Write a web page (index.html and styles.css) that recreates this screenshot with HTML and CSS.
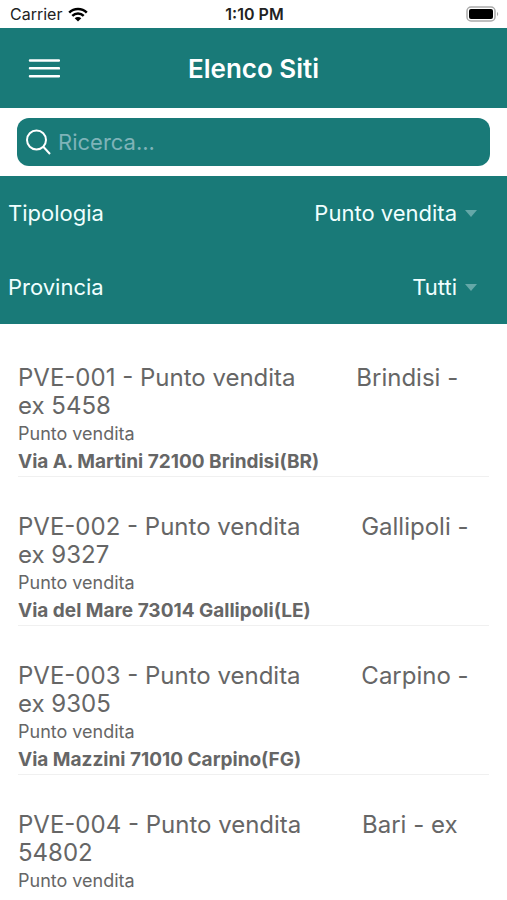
FILE: index.html
```html
<!DOCTYPE html>
<html lang="it">
  <head>
    <meta charset="UTF-8" />
    <meta name="viewport" content="width=device-width, initial-scale=1.0" />
    <title>Elenco Siti</title>
    <link rel="stylesheet" href="styles.css">
  </head>
  <body>
    <div class="app">
      <div class="status-bar">
        <div class="carrier">
          <span>Carrier</span>
          <svg class="wifi" viewBox="0 0 20 15" aria-hidden="true">
            <path d="M1.2 5.6a12.5 12.5 0 0 1 17.6 0M4.3 8.9a8.1 8.1 0 0 1 11.4 0" fill="none" stroke="currentColor" stroke-width="2.5" />
            <path d="M10 14.6l-3.3-3.3a4.7 4.7 0 0 1 6.6 0z" fill="currentColor" />
          </svg>
        </div>
        <time class="clock">1:10 PM</time>
        <svg class="battery" viewBox="0 0 33 16" aria-hidden="true">
          <rect x="1" y="1" width="28" height="14" rx="4" fill="none" stroke="#aaa" stroke-width="1.5" />
          <rect x="3" y="3" width="24" height="10" rx="2" />
          <path d="M31 6c1.6.6 1.6 3.4 0 4z" fill="#aaa" />
        </svg>
      </div>

      <header class="header">
        <button class="menu-button" type="button" aria-label="Menu">
          <svg viewBox="0 0 32 20" aria-hidden="true">
            <path d="M2 2.500h29M2 10.300h29M2 18.200h29" stroke="currentColor" stroke-width="2.5" stroke-linecap="round" />
          </svg>
        </button>
        <h1>Elenco Siti</h1>
      </header>

      <div class="search">
        <label class="search-box">
          <svg viewBox="0 0 26 26" aria-hidden="true">
            <circle cx="10.500" cy="11" r="9.500" />
            <path d="M17.300 17.800L24 25" />
          </svg>
          <input type="search" placeholder="Ricerca..." aria-label="Ricerca" />
        </label>
      </div>

      <div class="filters">
        <div class="filter">
          <label for="tipologia">Tipologia</label>
          <select id="tipologia">
            <option>Punto vendita</option>
          </select>
          <span class="arrow"></span>
        </div>
        <div class="filter">
          <label for="provincia">Provincia</label>
          <select id="provincia">
            <option>Tutti</option>
          </select>
          <span class="arrow"></span>
        </div>
      </div>

      <ul class="site-list">
        <li class="site">
          <h2>PVE-001 - Punto vendita         Brindisi - ex 5458</h2>
          <p class="type">Punto vendita</p>
          <p class="address">Via A. Martini 72100 Brindisi(BR)</p>
        </li>
        <li class="site">
          <h2>PVE-002 - Punto vendita         Gallipoli - ex 9327</h2>
          <p class="type">Punto vendita</p>
          <p class="address">Via del Mare 73014 Gallipoli(LE)</p>
        </li>
        <li class="site">
          <h2>PVE-003 - Punto vendita         Carpino - ex 9305</h2>
          <p class="type">Punto vendita</p>
          <p class="address">Via Mazzini 71010 Carpino(FG)</p>
        </li>
        <li class="site">
          <h2>PVE-004 - Punto vendita         Bari - ex 54802</h2>
          <p class="type">Punto vendita</p>
        </li>
      </ul>
    </div>
  </body>
</html>
```

FILE: styles.css
```css
:root {
  --primary-color: #197a78;
  --text-color: #666;
  --border-color: #f0f0f0;
}

* {
  box-sizing: border-box;
}

body {
  font-family: Inter, "Liberation Sans", sans-serif;
  color: var(--text-color);
  background-color: white;
  margin: 0;
}

.app {
  display: flex;
  flex-direction: column;
  height: 100vh;
}

.status-bar {
  display: grid;
  grid-template-columns: 1fr auto 1fr;
  align-items: center;
  flex: none;
  height: 28px;
  padding: 0 8px 0 10px;
  font-size: 16px;
  color: #222;
}

.carrier {
  display: flex;
  align-items: center;
  gap: 6px;
}

.wifi {
  width: 20px;
  height: 15px;
  color: black;
}

.clock {
  font-weight: 600;
}

.battery {
  width: 33px;
  height: 16px;
  justify-self: end;
}

.header {
  display: grid;
  grid-template-columns: 1fr auto 1fr;
  align-items: center;
  flex: none;
  height: 80px;
  padding: 0 28px;
  background-color: var(--primary-color);
  color: white;
}

.header h1 {
  margin: 0;
  font-size: 26px;
  font-weight: 600;
}

.menu-button {
  justify-self: start;
  padding: 0;
  border: none;
  background: none;
  color: white;
  cursor: pointer;
}

.menu-button svg {
  display: block;
  width: 32px;
  height: 20px;
}

.search {
  flex: none;
  padding: 10px 17px;
}

.search-box {
  display: flex;
  align-items: center;
  gap: 6px;
  height: 48px;
  padding: 0 9px;
  border-radius: 12px;
  background-color: var(--primary-color);
}

.search-box svg {
  flex: none;
  width: 26px;
  height: 26px;
  fill: none;
  stroke: white;
  stroke-width: 2;
}

.search-box input {
  flex: 1;
  min-width: 0;
  padding: 0;
  border: none;
  outline: none;
  background: none;
  font: inherit;
  font-size: 22px;
  color: white;
}

.search-box input::placeholder {
  color: #7fb3b8;
}

.filters {
  flex: none;
  background-color: var(--primary-color);
  color: #f0ffff;
  font-size: 22px;
}

.filter {
  display: flex;
  align-items: center;
  height: 74px;
  padding: 0 30px 0 8px;
}

.filter select {
  flex: 1;
  min-width: 0;
  padding: 0;
  border: none;
  appearance: none;
  background: none;
  font: inherit;
  color: inherit;
  text-align-last: right;
  cursor: pointer;
}

.arrow {
  margin-left: 8px;
  border: 6px solid transparent;
  border-top: 7px solid #65a8a8;
  border-bottom: none;
}

.site-list {
  flex: 1;
  min-height: 0;
  margin: 0;
  padding: 4px 18px 0;
  list-style: none;
  overflow-y: auto;
  scrollbar-width: none;
}

.site {
  height: 149px;
  padding-top: 36px;
  border-bottom: 1px solid var(--border-color);
}

.site h2 {
  margin: 0;
  padding-right: 12px;
  font-size: 24px;
  font-weight: 400;
  line-height: 28px;
  white-space: pre-wrap;
}

.site p {
  margin: 0;
  font-size: 18px;
  line-height: 28px;
}

.site .address {
  font-size: 19px;
  font-weight: 700;
}
```
